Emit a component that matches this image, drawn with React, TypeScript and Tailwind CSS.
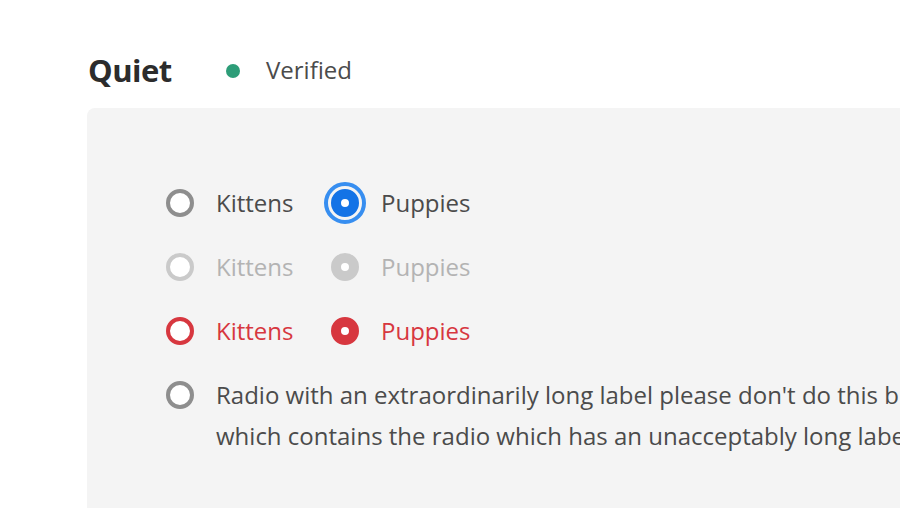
import React from "react";

type Variant = "default" | "disabled" | "invalid";

function Radio({ selected, variant, focused }: { selected?: boolean; variant: Variant; focused?: boolean }) {
  let cls = "";
  if (variant === "default") {
    cls = selected ? "border-[10px] border-[#1473e6]" : "border-4 border-[#8e8e8e]";
  } else if (variant === "disabled") {
    cls = selected ? "border-[10px] border-[#cacaca]" : "border-4 border-[#cacaca]";
  } else {
    cls = selected ? "border-[10px] border-[#d7373f]" : "border-4 border-[#d7373f]";
  }
  return (
    <span
      className={
        "box-border block w-[28px] h-[28px] shrink-0 rounded-full bg-white mt-[6.5px] " +
        cls +
        (focused ? " outline-[4px] outline-solid outline-[#378ef0] outline-offset-[3px]" : "")
      }
    />
  );
}

function Item({
  label,
  selected,
  variant,
  focused,
  w,
}: {
  label: string;
  selected?: boolean;
  variant: Variant;
  focused?: boolean;
  w?: string;
}) {
  const color =
    variant === "default" ? "text-[#4b4b4b]" : variant === "disabled" ? "text-[#b3b3b3]" : "text-[#d7373f]";
  return (
    <div className={"flex items-start gap-[22px] " + (w ?? "")}>
      <Radio selected={selected} variant={variant} focused={focused} />
      <span className={"whitespace-nowrap " + color}>{label}</span>
    </div>
  );
}

function Row({ variant, focused }: { variant: Variant; focused?: boolean }) {
  return (
    <div className="flex items-start">
      <Item label="Kittens" variant={variant} w="w-[165px]" />
      <Item label="Puppies" variant={variant} selected focused={focused} />
    </div>
  );
}

export default function App() {
  return (
    <div
      className="w-[900px] h-[508px] overflow-hidden bg-white"
      style={{ fontFamily: '"Open Sans", "Noto Sans", sans-serif' }}
    >
      <div className="pl-[87px] pt-[50px]">
        <div className="flex items-center h-[40px]">
          <h2 className="w-[139px] pl-[1px] text-[31px] font-bold text-[#2c2c2c] leading-[40px] tracking-[-0.5px]">
            Quiet
          </h2>
          <span className="mt-[2px] w-[14px] h-[14px] rounded-full bg-[#2d9d78]" />
          <span className="ml-[26px] text-[24px] text-[#4b4b4b] leading-[40px]">Verified</span>
        </div>
        <div className="mt-[18px] w-[1200px] h-[600px] rounded-tl-[8px] bg-[#f4f4f4] pl-[79px] pt-[74px]">
          <div className="flex flex-col gap-[23px] text-[24px] leading-[41px]">
            <Row variant="default" focused />
            <Row variant="disabled" />
            <Row variant="invalid" />
            <div className="flex items-start gap-[22px]">
              <Radio variant="default" />
              <span className="text-[#4b4b4b] whitespace-nowrap">
                Radio with an extraordinarily long label please don't do this but just in case here is a story
                <br />
                which contains the radio which has an unacceptably long label so we can test wrapping.
              </span>
            </div>
          </div>
        </div>
      </div>
    </div>
  );
}
